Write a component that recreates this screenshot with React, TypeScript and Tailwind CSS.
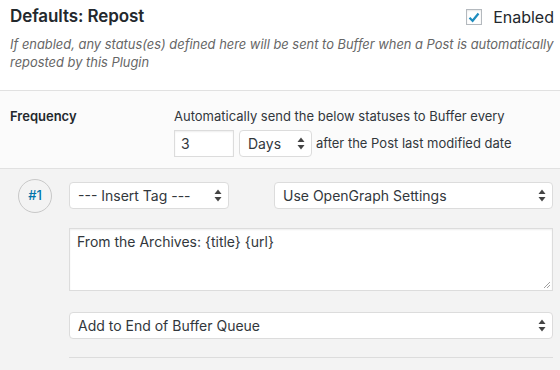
import React from "react";

const Arrows = () => (
  <svg width="8" height="13" viewBox="0 0 8 13" className="shrink-0">
    <path d="M4 0.5 L7.5 5 L0.5 5 Z" fill="#444" />
    <path d="M4 12.5 L7.5 8 L0.5 8 Z" fill="#444" />
  </svg>
);

const Select = ({ label, className }: { label: string; className: string }) => (
  <div
    className={`flex items-center justify-between bg-white border border-[#dcdcdc] rounded-[4px] pl-[8px] pr-[6px] text-[14px] text-[#32373c] ${className}`}
  >
    <span>{label}</span>
    <Arrows />
  </div>
);

export default function App() {
  return (
    <div
      className="w-[560px] h-[370px] overflow-hidden bg-[#f3f3f3] text-[#23282d]"
      style={{ fontFamily: "Inter, 'Noto Sans', sans-serif" }}
    >
      <div className="bg-white px-[10px] pt-[6px] h-[91px] border-b border-[#e1e1e1]">
        <div className="flex items-center justify-between h-[22px]">
          <div className="text-[17px] font-semibold text-[#23282d] tracking-[-0.1px]">Defaults: Repost</div>
          <div className="flex items-center gap-[11px] -mr-[4px]">
            <div className="w-[16px] h-[16px] border border-[#b4b9be] bg-white flex items-center justify-center shadow-[inset_0_1px_2px_rgba(0,0,0,0.1)]">
              <svg width="12" height="11" viewBox="0 0 12 11">
                <path d="M1.5 5.8 L4.6 8.8 L10.5 1.5" stroke="#1e8cbe" strokeWidth="2.2" fill="none" />
              </svg>
            </div>
            <span className="text-[16px] text-[#23282d]">Enabled</span>
          </div>
        </div>
        <p className="mt-[8px] -mr-[8px] text-[12.9px] italic leading-[18px] text-[#666]">
          If enabled, any status(es) defined here will be sent to Buffer when a Post is automatically reposted by this Plugin
        </p>
      </div>

      <div className="bg-[#fbfbfb] h-[78px] border-b border-[#e1e1e1] flex px-[10px] pt-[16px]">
        <div className="w-[164px] text-[13px] font-semibold leading-[18px]">Frequency</div>
        <div className="flex flex-col">
          <div className="text-[13px] leading-[18px] text-[#32373c]">
            Automatically send the below statuses to Buffer every
          </div>
          <div className="flex items-center mt-[5px] gap-[5px]">
            <div className="w-[60px] h-[27px] border border-[#dcdcdc] bg-white shadow-[inset_0_1px_2px_rgba(0,0,0,0.07)] flex items-center px-[6px] text-[14px] text-[#32373c]">
              3
            </div>
            <Select label="Days" className="w-[73px] h-[27px]" />
            <span className="text-[13px] text-[#32373c] -ml-[1px]">after the Post last modified date</span>
          </div>
        </div>
      </div>

      <div className="flex pt-[10px] pl-[18px] pr-[7px]">
        <div className="w-[51px] shrink-0">
          <div className="w-[34px] h-[34px] rounded-full border border-[#c8c8c8] flex items-center justify-center text-[13px] text-[#0073aa] font-medium">
            #1
          </div>
        </div>
        <div className="flex-1 flex flex-col">
          <div className="flex justify-between mt-[3px]">
            <Select label="--- Insert Tag ---" className="w-[160px] h-[27px]" />
            <Select label="Use OpenGraph Settings" className="w-[279px] h-[27px]" />
          </div>
          <div className="mt-[19px] h-[63px] bg-white border border-[#dcdcdc] shadow-[inset_0_1px_2px_rgba(0,0,0,0.07)] px-[7px] pt-[2px] text-[14px] text-[#32373c] relative">
            From the Archives: {"{title}"} {"{url}"}
            <svg width="8" height="8" viewBox="0 0 8 8" className="absolute right-[1px] bottom-[1px]">
              <path d="M7 1 L1 7 M7 4 L4 7" stroke="#888" strokeWidth="0.8" />
            </svg>
          </div>
          <Select label="Add to End of Buffer Queue" className="mt-[21px] h-[27px]" />
          <div className="mt-[18px] border-t border-[#dcdcdc]" />
        </div>
      </div>
    </div>
  );
}
